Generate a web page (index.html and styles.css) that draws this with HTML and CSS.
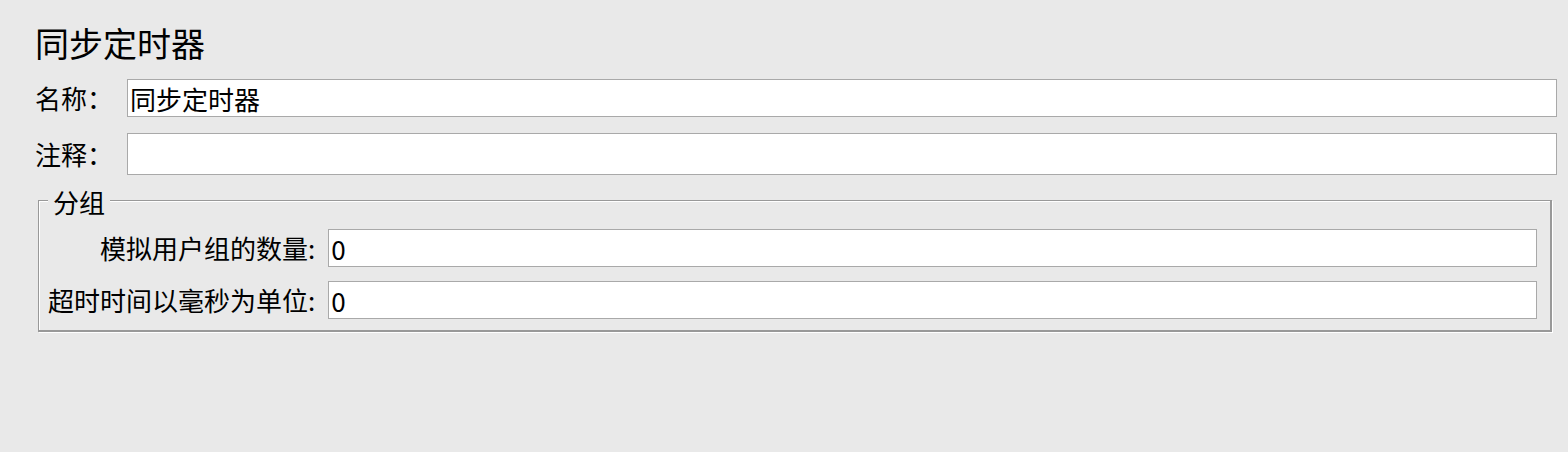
FILE: index.html
```html
<!DOCTYPE html>
<html lang="zh-CN">
<head>
<meta charset="utf-8">
<title>同步定时器</title>
<link rel="stylesheet" href="styles.css">
</head>
<body>
<div class="panel">
  <h1 class="title">同步定时器</h1>
  <div class="row">
    <label class="row-label">名称：</label>
    <input class="textbox" type="text" value="同步定时器">
  </div>
  <div class="row row-comment">
    <label class="row-label">注释：</label>
    <input class="textbox textbox-tall" type="text" value="">
  </div>
  <fieldset class="group">
    <legend class="group-title">分组</legend>
    <div class="group-grid">
      <label class="grid-label">模拟用户组的数量:</label>
      <input class="textbox" type="text" value="0">
      <label class="grid-label">超时时间以毫秒为单位:</label>
      <input class="textbox" type="text" value="0">
    </div>
  </fieldset>
</div>
</body>
</html>
```

FILE: styles.css
```css
html, body {
  margin: 0;
  background: #e9e9e9;
}

body {
  font-family: "Noto Sans CJK SC", "Noto Sans", sans-serif;
  color: #000;
  width: 1568px;
  height: 452px;
  overflow: hidden;
}

.panel {
  padding: 22px 11px 0 35px;
}

.title {
  margin: 0;
  font-size: 34px;
  font-weight: normal;
  line-height: 42px;
}

.row {
  display: flex;
  align-items: center;
  margin-top: 15px;
}

.row-comment {
  margin-top: 16px;
}

.row-label {
  width: 92px;
  flex: none;
  font-size: 26px;
  line-height: 38px;
}

.textbox {
  box-sizing: border-box;
  flex: 1;
  min-width: 0;
  height: 38px;
  margin: 0;
  padding: 0 2px;
  border: 1px solid #a9a9a9;
  border-radius: 0;
  background: #fff;
  font-family: "Noto Sans CJK SC", "Noto Sans", sans-serif;
  font-size: 26px;
  color: #000;
  outline: none;
}

.textbox-tall {
  height: 42px;
}

.group {
  margin: 8px 5px 0 3px;
  padding: 12px 13px 11px 9px;
  border: 1px solid #999;
  border-right-width: 2px;
  border-bottom-width: 2px;
  box-shadow: inset 1px 1px 0 #fff, 1px 1px 0 #fff;
  min-width: 0;
}

.group-title {
  padding: 4px 5px 0 5px;
  font-size: 26px;
  line-height: 30px;
  background: #e9e9e9;
}

.group-grid {
  display: grid;
  grid-template-columns: auto 1fr;
  column-gap: 13px;
  row-gap: 14px;
  align-items: center;
}

.grid-label {
  justify-self: end;
  font-size: 26px;
  line-height: 38px;
  white-space: nowrap;
}

.group-grid .textbox {
  width: 100%;
}
```
